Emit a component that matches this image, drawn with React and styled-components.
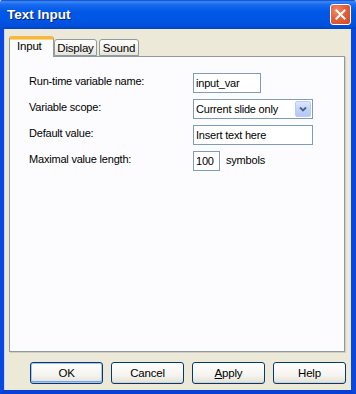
import React from "react";
import styled, { createGlobalStyle } from "styled-components";

const Global = createGlobalStyle`
  html, body { margin: 0; padding: 0; background: #ffffff; }
  body { font-family: "Liberation Sans", Arial, sans-serif; font-size: 11px; color: #000; }
`;

const Frame = styled.div`
  width: 356px;
  height: 394px;
  display: flex;
  flex-direction: column;
  box-sizing: border-box;
`;

const TitleBar = styled.div`
  height: 29px;
  flex: none;
  display: flex;
  align-items: center;
  justify-content: space-between;
  padding: 0 5px 0 7px;
  box-sizing: border-box;
  border-radius: 2px 2px 0 0;
  background: linear-gradient(180deg, #0842c8 0%, #3d8cf5 6%, #1a6cf0 14%, #0058e6 40%, #0055e4 70%, #0050dc 88%, #0044c4 100%);
`;

const Title = styled.span`
  font-family: "Liberation Sans", Arial, sans-serif;
  font-weight: bold;
  font-size: 13.5px;
  color: #ffffff;
  text-shadow: 1px 1px 0 #0a1e7a;
`;

const CloseButton = styled.div`
  width: 21px;
  height: 21px;
  box-sizing: border-box;
  border: 1px solid #ffffff;
  border-radius: 3px;
  background: radial-gradient(circle at 30% 30%, #f08a6a 0%, #e2603a 45%, #cf4a22 100%);
  display: flex;
  align-items: center;
  justify-content: center;
`;

const Client = styled.div`
  flex: 1;
  display: flex;
  flex-direction: column;
  background: #ece9d8;
  border-left: 4px solid #0848e0;
  border-right: 5px solid #0848e0;
  border-bottom: 4px solid #0840d6;
  box-shadow: inset 1px 0 0 #c6d4f5;
  padding: 7px 6px 6px 5px;
  box-sizing: border-box;
  letter-spacing: -0.2px;
`;

const TabStrip = styled.div`
  display: flex;
  align-items: flex-end;
  height: 20px;
  position: relative;
  z-index: 1;
`;

const Tab = styled.div`
  box-sizing: border-box;
  width: ${p => p.$w}px;
  margin-left: ${p => p.$ml || 0}px;
  height: ${p => (p.$active ? 21 : 17)}px;
  margin-bottom: ${p => (p.$active ? -1 : 0)}px;
  border: 1px solid #919b9c;
  border-bottom: ${p => (p.$active ? "none" : "1px solid #919b9c")};
  border-top: ${p => (p.$active ? "3px solid #f7b646" : "1px solid #919b9c")};
  border-radius: 3px 3px 0 0;
  background: ${p => (p.$active ? "#fcfcfe" : "linear-gradient(180deg, #ffffff 0%, #f4f3ee 50%, #e6e4dc 100%)")};
  display: flex;
  justify-content: ${p => (p.$active ? "flex-start" : "center")};
  padding-left: ${p => (p.$active ? 7 : 0)}px;
  padding-top: ${p => (p.$active ? 1 : 2)}px;
  font-size: 11.5px;
  line-height: 13px;
  box-shadow: ${p => (p.$active ? "inset 0 1px 0 #ffd86f" : "none")};
`;

const Panel = styled.div`
  flex: 1;
  box-sizing: border-box;
  background: #fcfcfe;
  border: 1px solid #919b9c;
  box-shadow: 1px 1px 0 #d0cec4;
  padding: 16px 10px 0 19px;
`;

const Form = styled.div`
  display: grid;
  grid-template-columns: 164px auto;
  row-gap: 6px;
  align-items: start;
`;

const Label = styled.div`
  line-height: 13px;
  padding-top: 2px;
  font-size: 11px;
`;

const Field = styled.div`
  display: flex;
  align-items: center;
  gap: 6px;
`;

const TextBox = styled.div`
  width: ${p => p.$w}px;
  height: 20px;
  box-sizing: border-box;
  border: 1px solid #7f9db9;
  background: #ffffff;
  padding: 3px 0 0 2px;
  font-size: 11px;
  line-height: 13px;
  white-space: nowrap;
  overflow: hidden;
`;

const Select = styled.div`
  width: 120px;
  height: 20px;
  box-sizing: border-box;
  border: 1px solid #7f9db9;
  background: #ffffff;
  display: flex;
  align-items: stretch;
  justify-content: space-between;
  padding: 1px;
`;

const SelectText = styled.span`
  padding: 2px 0 0 1px;
  font-size: 11px;
  line-height: 13px;
`;

const DropButton = styled.div`
  width: 16px;
  box-sizing: border-box;
  border: 1px solid #b9cdf5;
  border-radius: 2px;
  background: linear-gradient(180deg, #dce7fd 0%, #c3d4fb 50%, #b3c8f7 100%);
  display: flex;
  align-items: center;
  justify-content: center;
`;

const Unit = styled.span`
  font-size: 11px;
  margin-top: -3px;
`;

const ButtonRow = styled.div`
  display: flex;
  justify-content: flex-end;
  gap: 8px;
  margin-top: 10px;
  margin-right: -1px;
`;

const Button = styled.div`
  width: 73px;
  height: 22px;
  box-sizing: border-box;
  border: 1px solid #003c74;
  border-radius: 3px;
  background: linear-gradient(180deg, #ffffff 0%, #f5f4ef 60%, #e3e0d6 100%);
  box-shadow: ${p => (p.$default ? "inset 0 0 0 1px #a8c4ef, inset 0 -1px 0 1px #7ea2e0" : "inset 0 -1px 0 #d6d0c5")};
  display: flex;
  align-items: center;
  justify-content: center;
  font-size: 11.5px;
`;

const U = styled.span`
  text-decoration: underline;
`;

export default function App() {
  return (
    <>
      <Global />
      <Frame>
        <TitleBar>
          <Title>Text Input</Title>
          <CloseButton>
            <svg width="11" height="11" viewBox="0 0 11 11">
              <path d="M1.5 1.5 L9.5 9.5 M9.5 1.5 L1.5 9.5" stroke="#ffffff" strokeWidth="2" strokeLinecap="square" />
            </svg>
          </CloseButton>
        </TitleBar>
        <Client>
          <TabStrip>
            <Tab $active $w={45}>Input</Tab>
            <Tab $w={43}>Display</Tab>
            <Tab $w={40} $ml={2}>Sound</Tab>
          </TabStrip>
          <Panel>
            <Form>
              <Label>Run-time variable name:</Label>
              <TextBox $w={68}>input_var</TextBox>
              <Label>Variable scope:</Label>
              <Select>
                <SelectText>Current slide only</SelectText>
                <DropButton>
                  <svg width="8" height="6" viewBox="0 0 8 6">
                    <path d="M1 1.5 L4 4.5 L7 1.5" stroke="#4d6185" strokeWidth="1.8" fill="none" />
                  </svg>
                </DropButton>
              </Select>
              <Label>Default value:</Label>
              <TextBox $w={120}>Insert text here</TextBox>
              <Label>Maximal value length:</Label>
              <Field>
                <TextBox $w={27}>100</TextBox>
                <Unit>symbols</Unit>
              </Field>
            </Form>
          </Panel>
          <ButtonRow>
            <Button $default>OK</Button>
            <Button>Cancel</Button>
            <Button><span><U>A</U>pply</span></Button>
            <Button>Help</Button>
          </ButtonRow>
        </Client>
      </Frame>
    </>
  );
}
